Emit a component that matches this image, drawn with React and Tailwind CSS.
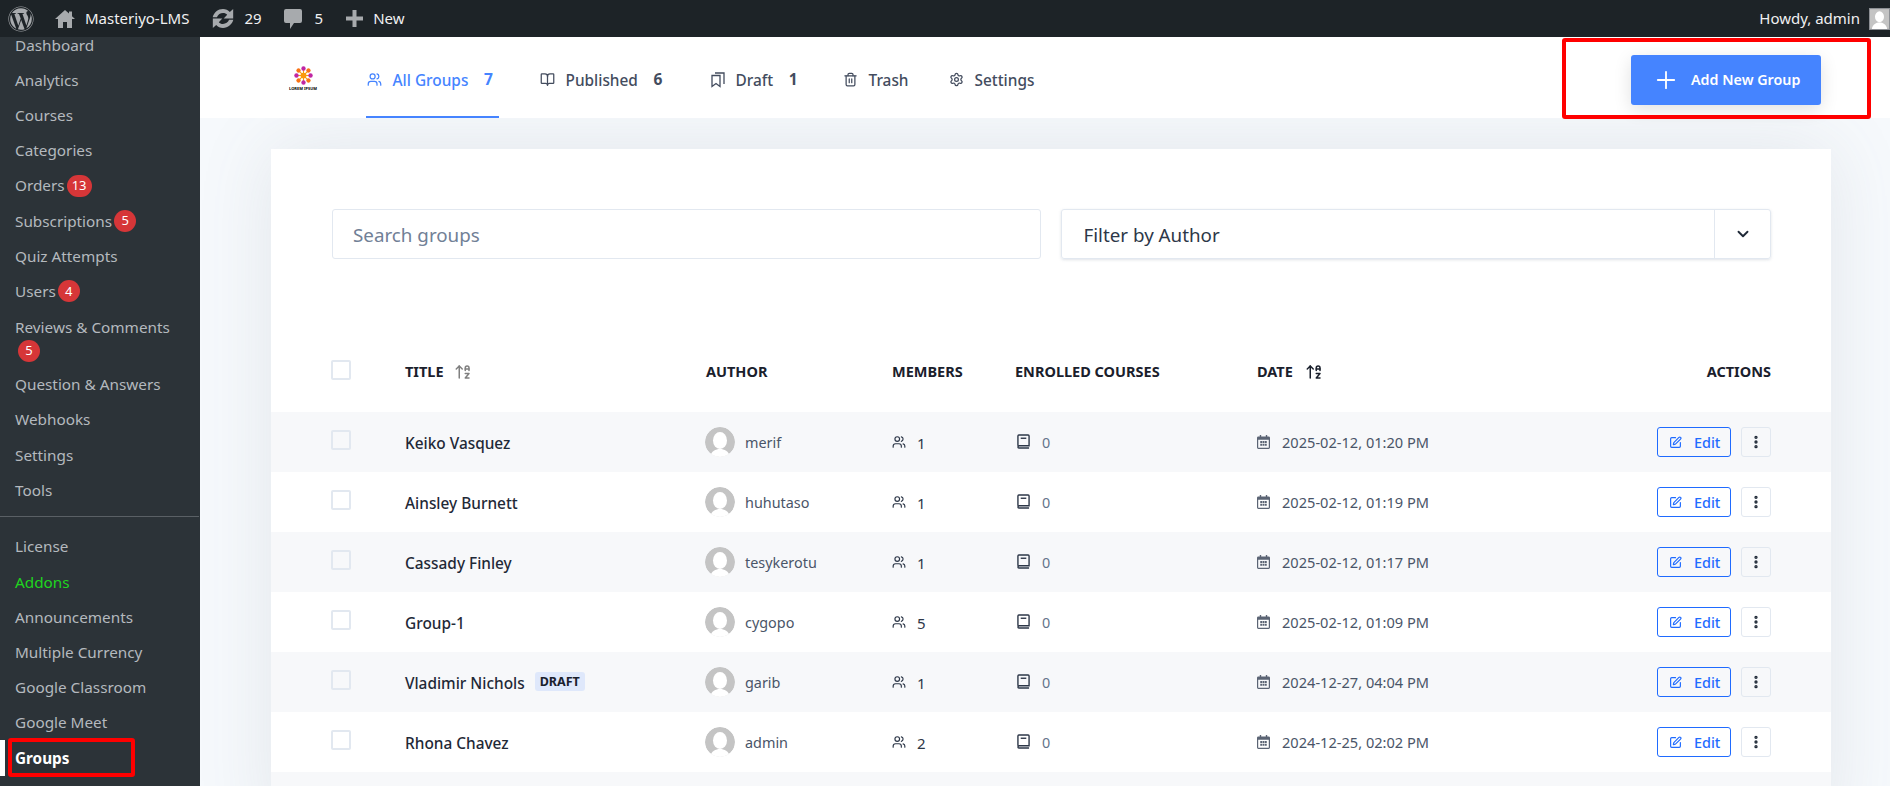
import { Users, BookOpen, Trash2, Settings, SquarePen, ArrowUpAZ, EllipsisVertical, ChevronDown, Plus } from "lucide-react";
import { FaWordpress } from "react-icons/fa";

const menuTop = [
  { label: "Dashboard" },
  { label: "Analytics" },
  { label: "Courses" },
  { label: "Categories" },
  { label: "Orders", badge: "13" },
  { label: "Subscriptions", badge: "5" },
  { label: "Quiz Attempts" },
  { label: "Users", badge: "4" },
  { label: "Reviews & Comments", badge: "5", wrap: true },
  { label: "Question & Answers" },
  { label: "Webhooks" },
  { label: "Settings" },
  { label: "Tools" },
];

const menuBottom = ["License", "Addons", "Announcements", "Multiple Currency", "Google Classroom", "Google Meet"];

const groups = [
  { name: "Keiko Vasquez", author: "merif", members: 1, date: "2025-02-12, 01:20 PM" },
  { name: "Ainsley Burnett", author: "huhutaso", members: 1, date: "2025-02-12, 01:19 PM" },
  { name: "Cassady Finley", author: "tesykerotu", members: 1, date: "2025-02-12, 01:17 PM" },
  { name: "Group-1", author: "cygopo", members: 5, date: "2025-02-12, 01:09 PM" },
  { name: "Vladimir Nichols", author: "garib", members: 1, date: "2024-12-27, 04:04 PM", draft: true },
  { name: "Rhona Chavez", author: "admin", members: 2, date: "2024-12-25, 02:02 PM" },
];

const columns = "grid grid-cols-[74px_301px_186px_123px_242px_1fr_auto] items-center px-[60px]";

function Badge({ children, className }) {
  return (
    <span className={`inline-flex h-[22px] min-w-[22px] items-center justify-center rounded-full bg-[#d63638] px-[5px] text-[13px] text-white ${className}`}>
      {children}
    </span>
  );
}

function Avatar() {
  return (
    <svg viewBox="0 0 30 30" className="-ml-[1px] h-[30px] w-[30px] shrink-0 rounded-full">
      <circle cx="15" cy="15" r="15" fill="#c4c4c4" />
      <ellipse cx="15" cy="13.5" rx="7" ry="8.5" fill="#fff" />
      <path d="M5 30c1-6 6-8 10-8s9 2 10 8z" fill="#fff" />
    </svg>
  );
}

function Logo() {
  const petals = [0, 45, 90, 135, 180, 225, 270, 315];
  return (
    <div className="mb-[3px] flex w-[26px] flex-col items-center">
      <svg viewBox="0 0 20 20" className="h-[19px] w-[19px]">
        {petals.map((deg, i) => (
          <g key={deg} transform={`rotate(${deg} 10 10)`}>
            <rect x="9.4" y="3" width="1.2" height="5" fill="#f59e0b" />
            <circle cx="10" cy="2.6" r="2.3" fill={i % 2 ? "#f97316" : "#c026a3"} />
          </g>
        ))}
        <circle cx="10" cy="10" r="3" fill="#fb9a0c" />
      </svg>
      <span className="mt-[2px] whitespace-nowrap text-[4px] font-bold leading-[4px] text-black">LOREM IPSUM</span>
    </div>
  );
}

function Tab({ icon, label, count, width, active }) {
  return (
    <div className={`flex h-full shrink-0 items-center border-b-2 ${width} ${active ? "border-[#4584ff] text-[#4584ff]" : "border-transparent text-[#434c5e]"}`}>
      <span className="ml-[1px] mr-[10.5px] mt-[1px] flex w-[15px] justify-center">{icon}</span>
      <span className="mt-[3px] text-[15.4px] font-medium">{label}</span>
      {count && <span className="ml-[15.5px] mt-[1px] text-[15.5px] font-bold">{count}</span>}
    </div>
  );
}

function Checkbox() {
  return <span className="mb-[4px] block h-[20px] w-[20px] rounded-[2px] border-2 border-[#e2e8f0]" />;
}

function AdminBar() {
  return (
    <header className="flex h-[37px] shrink-0 items-center bg-[#1d2327] text-[15px] text-[#f0f0f1]">
      <FaWordpress className="ml-[8px] text-[26px] text-[#a7aaad]" />
      <svg viewBox="0 0 20 18" className="ml-[21px] h-[18px] w-[20px] text-[#a7aaad]" fill="currentColor">
        <path d="M10 0 0 9h3v9h5v-6h4v6h5V9h3l-3-2.7V1.5h-3v2.1z" />
      </svg>
      <span className="ml-[10px]">Masteriyo-LMS</span>
      <svg viewBox="3 3 16 14" className="ml-[23px] h-[19px] w-[22px] text-[#a7aaad]" fill="currentColor">
        <path d="M11 3c2 0 3.800.8 5 2.200L18.500 3v7h-7l2.600-2.700C13.400 6.500 12.300 6 11 6 9 6 7.300 7.200 6.500 9H3.400C4.300 5.600 7.300 3 11 3z" />
        <path d="M11 17c-2 0-3.800-.8-5-2.200L3.500 17v-7h7l-2.600 2.700c.7.8 1.800 1.300 3.100 1.300 2 0 3.700-1.200 4.500-3h3.100c-.9 3.400-3.900 6-7.600 6z" />
      </svg>
      <span className="ml-[10px]">29</span>
      <svg viewBox="0 0 18 22" className="ml-[22px] h-[22px] w-[18px] text-[#a7aaad]" fill="currentColor">
        <path d="M2 1h14a2 2 0 0 1 2 2v10a2 2 0 0 1-2 2H10l-4 6v-6H2a2 2 0 0 1-2-2V3a2 2 0 0 1 2-2z" />
      </svg>
      <span className="ml-[13px]">5</span>
      <svg viewBox="0 0 17 17" className="ml-[23px] h-[17px] w-[17px] text-[#a7aaad]" fill="currentColor">
        <path d="M6.500 0h4v6.500H17v4h-6.500V17h-4v-6.500H0v-4h6.500z" />
      </svg>
      <span className="ml-[10px]">New</span>
      <span className="ml-auto mr-[9px]">Howdy, admin</span>
      <svg viewBox="0 0 21 22" className="h-[22px] w-[21px] border border-[#8c8f94]">
        <rect width="21" height="22" fill="#c4c4c4" />
        <ellipse cx="10.500" cy="8.500" rx="5" ry="6" fill="#fff" />
        <path d="M2 22c1-5 5-7 8.500-7s7.500 2 8.500 7z" fill="#fff" />
      </svg>
    </header>
  );
}

function Sidebar() {
  return (
    <aside className="w-[200px] shrink-0 overflow-hidden bg-[#2c3338] text-[15.3px] text-[#b4b9be]">
      <div className="-mt-[9.5px]">
        {menuTop.map((item) =>
          item.wrap ? (
            <div key={item.label} className="h-[58px] pl-[15px] pt-[7px]">
              <div className="leading-[22px]">{item.label}</div>
              <Badge className="ml-[3px]">{item.badge}</Badge>
            </div>
          ) : (
            <div key={item.label} className="flex h-[35.2px] items-center pl-[15px]">
              {item.label}
              {item.badge && <Badge className="ml-[2px]">{item.badge}</Badge>}
            </div>
          )
        )}
        <div className="mr-[1px] mt-[8.5px] h-px bg-[#5a6065]" />
        <div className="mt-[12px]">
          {menuBottom.map((label) => (
            <div key={label} className={`flex h-[35.2px] items-center pl-[15px] ${label === "Addons" ? "text-[#1fd51f]" : ""}`}>
              {label}
            </div>
          ))}
          <div className="flex h-[35.2px] items-center border-l-[5px] border-white pl-[10px] font-bold text-white">Groups</div>
        </div>
      </div>
    </aside>
  );
}

function GroupRow({ group, index }) {
  return (
    <div className={`${columns} h-[60px] ${index % 2 === 0 ? "bg-[#f7f8fa]" : "bg-white"}`}>
      <Checkbox />
      <div className="flex items-center pt-[4px] text-[15.4px] font-medium text-[#1f2937]">
        {group.name}
        {group.draft && <span className="mb-[6px] ml-[10px] rounded-[3px] bg-[#dfe8fb] px-[5px] py-px text-[12.5px] font-bold leading-[17px] text-[#1a202c]">DRAFT</span>}
      </div>
      <div className="flex items-center gap-[10px] text-[14.4px] text-[#4a5568]">
        <Avatar />
        <span className="pt-[2px]">{group.author}</span>
      </div>
      <div className="flex items-center text-[15px] text-[#2d3748]">
        <Users size={14} className="mr-[11px] text-[#2d3748]" />
        <span className="pt-[2px]">{group.members}</span>
      </div>
      <div className="flex items-center text-[14.4px] text-[#64748b]">
        <svg viewBox="0 0 14 16" className="ml-[2px] mr-[12px] h-[15px] w-[13px] text-[#2d3748]" fill="none" stroke="currentColor" strokeWidth="1.500">
          <path d="M1 12.500V2a1 1 0 0 1 1-1h10a1 1 0 0 1 1 1v10.500H2.500A1.500 1.500 0 0 0 1 14a1 1 0 0 0 1 1h11" />
          <path d="M4 4.500h6" />
        </svg>
        <span className="pt-[2px]">0</span>
      </div>
      <div className="flex items-center text-[14.6px] text-[#4a5568]">
        <svg viewBox="0 0 14 15" className="mr-[12px] h-[14px] w-[13px] text-[#5b6474]" fill="currentColor">
          <path d="M3 0h1.500v1.500h5V0H11v1.500h1.500A1.500 1.500 0 0 1 14 3v10.500a1.500 1.500 0 0 1-1.500 1.500h-11A1.500 1.500 0 0 1 0 13.500V3a1.500 1.500 0 0 1 1.500-1.500H3zM1.300 5v8.500c0 .1.100.2.200.2h11c.1 0 .2-.1.200-.2V5z" />
          <path d="M3.500 6.500h2v2h-2zM6 6.500h2v2H6zM8.500 6.500h2v2h-2zM3.500 9.500h2v2h-2zM6 9.500h2v2H6zM8.500 9.500h2v2h-2z" />
        </svg>
        <span className="pt-[2px]">{group.date}</span>
      </div>
      <div className="flex items-center justify-end gap-[10px]">
        <button className="flex h-[30px] w-[74px] items-center rounded-[3px] border border-[#1f6bff] pl-[11px] text-[14.4px] font-medium text-[#1f6bff]">
          <SquarePen size={13} strokeWidth={2.200} className="mr-[12px]" />
          <span className="pt-[1px]">Edit</span>
        </button>
        <button className="flex h-[30px] w-[30px] items-center justify-center rounded-[3px] border border-[#e2e8f0] text-[#1f2937]">
          <EllipsisVertical size={16} strokeWidth={3} />
        </button>
      </div>
    </div>
  );
}

export default function App() {
  return (
    <div className="relative flex h-screen flex-col overflow-hidden font-['Noto_Sans',sans-serif]">
      <AdminBar />
      <div className="flex min-h-0 flex-1">
        <Sidebar />
        <main className="flex min-w-0 flex-1 flex-col bg-[#f6f9fc]">
          <div className="relative z-10 flex h-[81px] shrink-0 items-center bg-white pl-[90px] pr-[69px] pt-[5px]">
            <Logo />
            <div className="ml-[50px] flex h-full">
              <Tab active icon={<Users size={15} />} label="All Groups" count="7" width="w-[133px]" />
              <div className="w-[40px]" />
              <Tab icon={<BookOpen size={15} />} label="Published" count="6" width="w-[130px]" />
              <div className="w-[40px]" />
              <Tab
                icon={
                  <svg viewBox="0 0 14 16" className="h-[16px] w-[14px]" fill="none" stroke="currentColor" strokeWidth="1.300">
                    <path d="M1 3.500h8v11l-4-3-4 3z" />
                    <path d="M4 1h9v11" />
                  </svg>
                }
                label="Draft"
                count="1"
                width="w-[93px]"
              />
              <div className="w-[40px]" />
              <Tab icon={<Trash2 size={15} />} label="Trash" width="w-[66px]" />
              <div className="w-[40px]" />
              <Tab icon={<Settings size={15} />} label="Settings" width="w-[86px]" />
            </div>
            <button className="ml-auto flex h-[50px] w-[190px] items-center rounded-[3px] bg-[#4584ff] pl-[21px] text-[14.3px] font-semibold text-white shadow-[0_5px_18px_rgba(0,0,0,0.12)]">
              <Plus size={28} strokeWidth={1.600} className="mr-[11px]" />
              Add New Group
            </button>
          </div>

          <div className="ml-[71px] mr-[59px] mt-[31px] flex-1 bg-white shadow-[0_0_70px_rgba(100,110,120,0.13)]">
            <div className="flex gap-[20px] pl-[61px] pr-[60px] pt-[60px]">
              <div className="flex h-[50px] flex-1 items-center rounded-[3px] border border-[#e2e8f0] pl-[20px] pt-[2px] text-[18.8px] text-[#718096]">Search groups</div>
              <div className="flex h-[50px] flex-1 items-center rounded-[3px] border border-[#e2e8f0] pl-[22px] text-[18.8px] text-[#2d3748] shadow-[0_1px_3px_rgba(100,116,139,0.2)]">
                <span className="flex-1 pt-[2px]">Filter by Author</span>
                <span className="flex h-full w-[56px] items-center justify-center border-l border-[#e2e8f0] text-[#1f2937]">
                  <ChevronDown size={18} strokeWidth={2.500} />
                </span>
              </div>
            </div>

            <div className={`${columns} mt-[73px] h-[80px] text-[14.5px] font-bold text-[#1a202c]`}>
              <Checkbox />
              <div className="flex items-center gap-[10px]">
                TITLE <ArrowUpAZ size={18} className="text-[#808080]" />
              </div>
              <div>AUTHOR</div>
              <div>MEMBERS</div>
              <div>ENROLLED COURSES</div>
              <div className="flex items-center gap-[12px]">
                DATE <ArrowUpAZ size={18} className="text-[#1a202c]" />
              </div>
              <div className="text-right">ACTIONS</div>
            </div>

            {groups.map((group, index) => (
              <GroupRow key={group.name} group={group} index={index} />
            ))}
            <div className="h-[60px] bg-[#f7f8fa]" />
          </div>
        </main>
      </div>

      <div className="absolute left-[1562px] top-[38px] z-20 h-[81px] w-[309px] rounded-[3px] border-4 border-[#ff0000]" />
      <div className="absolute left-[8px] top-[738px] z-20 h-[39px] w-[127px] rounded-[3px] border-4 border-[#ff0000]" />
    </div>
  );
}
